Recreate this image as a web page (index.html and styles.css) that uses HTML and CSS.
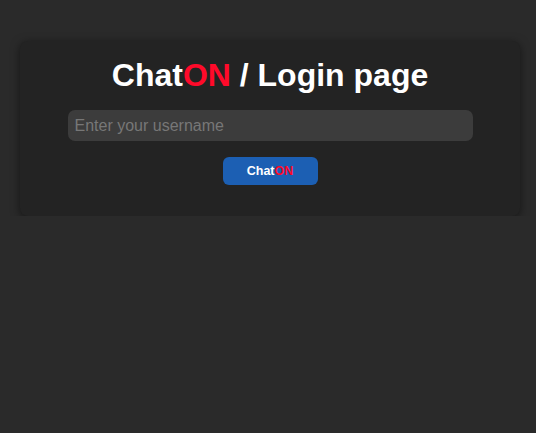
FILE: index.html
```html
<!DOCTYPE html>
<html>
<head>
<meta charset="utf-8">
<link rel="stylesheet" href="styles.css">
</head>
<body>
<div class="card">
  <h1 class="title">Chat<span class="on">ON</span> / Login page</h1>
  <input class="field" type="text" placeholder="Enter your username">
  <button class="btn">Chat<span class="on">ON</span></button>
</div>
</body>
</html>
```
FILE: styles.css
```css
html, body {
  margin: 0;
  padding: 0;
  background: #2a2a2a;
  font-family: "Liberation Sans", Arial, sans-serif;
}
body {
  padding-top: 41px;
}
.card {
  margin-left: 20px;
  width: 500px;
  box-sizing: border-box;
  background: #232323;
  border-radius: 8px;
  box-shadow: 0 2px 10px rgba(0, 0, 0, 0.5);
  padding: 16px 0 31px;
  display: flex;
  flex-direction: column;
  align-items: center;
}
.title {
  margin: 0;
  font-size: 32px;
  font-weight: bold;
  color: #ffffff;
  line-height: 37px;
}
.on {
  color: #ff0a2a;
}
.field {
  margin-top: 16px;
  width: 405px;
  height: 31px;
  box-sizing: border-box;
  border: none;
  outline: none;
  border-radius: 7px;
  background: #3c3c3c;
  color: #ddd;
  padding: 0 7px;
  font-family: "Liberation Sans", Arial, sans-serif;
  font-size: 16px;
}
.field::placeholder {
  color: #777777;
}
.btn {
  margin-top: 16px;
  width: 95px;
  height: 28px;
  border: none;
  border-radius: 6px;
  background: #1c5fb3;
  color: #ffffff;
  font-family: "Liberation Sans", Arial, sans-serif;
  font-weight: bold;
  font-size: 12.5px;
  padding: 0;
}
```
